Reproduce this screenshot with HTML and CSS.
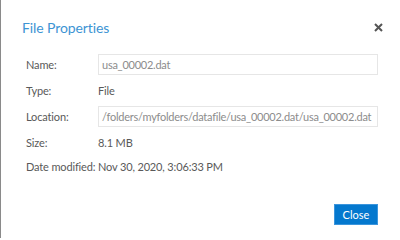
FILE: index.html
```html
<!DOCTYPE html>
<html>
<head>
<meta charset="utf-8">
<link rel="stylesheet" href="styles.css">
</head>
<body>
<div class="dialog">
  <div class="header">
    <h1 class="title">File Properties</h1>
    <span class="close-x" aria-label="Close">
      <svg width="9" height="9" viewBox="0 0 9 9"><path d="M1 1L8 8M8 1L1 8" stroke="#555" stroke-width="2"/></svg>
    </span>
  </div>
  <div class="props">
    <div class="row has-field">
      <span class="label">Name:</span>
      <div class="field">usa_00002.dat</div>
    </div>
    <div class="row">
      <span class="label">Type:</span>
      <span class="value">File</span>
    </div>
    <div class="row has-field">
      <span class="label">Location:</span>
      <div class="field">/folders/myfolders/datafile/usa_00002.dat/usa_00002.dat</div>
    </div>
    <div class="row">
      <span class="label">Size:</span>
      <span class="value">8.1 MB</span>
    </div>
    <div class="row last">
      <span class="label">Date modified:</span>
      <span class="value">Nov 30, 2020, 3:06:33 PM</span>
    </div>
  </div>
  <div class="footer">
    <button class="btn">Close</button>
  </div>
</div>
</body>
</html>
```
FILE: styles.css
```css
html, body {
  margin: 0;
  padding: 0;
  background: #fff;
}
body {
  width: 400px;
  height: 238px;
  overflow: hidden;
  font-family: "Lato", "Liberation Sans", sans-serif;
}
.dialog {
  box-sizing: border-box;
  height: 238px;
  border-left: 1px solid #8a8a8a;
  padding: 0 22px 0 21px;
  display: flex;
  flex-direction: column;
}
.header {
  flex: none;
  display: flex;
  align-items: center;
  justify-content: space-between;
  height: 54px;
}
.title {
  margin: 0;
  font-weight: normal;
  font-size: 14px;
  letter-spacing: -0.1px;
  color: #3d94d4;
}
.close-x {
  display: flex;
  margin-right: -5px;
}
.props {
  flex: none;
  display: flex;
  flex-direction: column;
  padding-left: 4px;
  font-size: 11px;
  letter-spacing: -0.15px;
  color: #595959;
}
.row {
  flex: none;
  display: flex;
  align-items: center;
  height: 21px;
}
.row.has-field {
  margin-bottom: 5px;
}
.row + .row.has-field {
  margin-top: 5px;
}
.row.last {
  margin-top: 3px;
}
.label {
  width: 72px;
  flex: none;
  white-space: nowrap;
}
.field {
  box-sizing: border-box;
  flex: 1;
  min-width: 0;
  height: 21px;
  border: 1px solid #e6e6e6;
  padding: 0 3px;
  display: flex;
  align-items: center;
  color: #8c8c8c;
  letter-spacing: -0.25px;
  white-space: nowrap;
  overflow: hidden;
}
.footer {
  display: flex;
  justify-content: flex-end;
  margin-top: auto;
  padding-bottom: 13px;
}
.btn {
  width: 44px;
  height: 21px;
  background: #0478ce;
  border: 1px solid #3b95dc;
  color: #fff;
  font-family: "Lato", "Liberation Sans", sans-serif;
  font-size: 11px;
  padding: 0;
}
```
